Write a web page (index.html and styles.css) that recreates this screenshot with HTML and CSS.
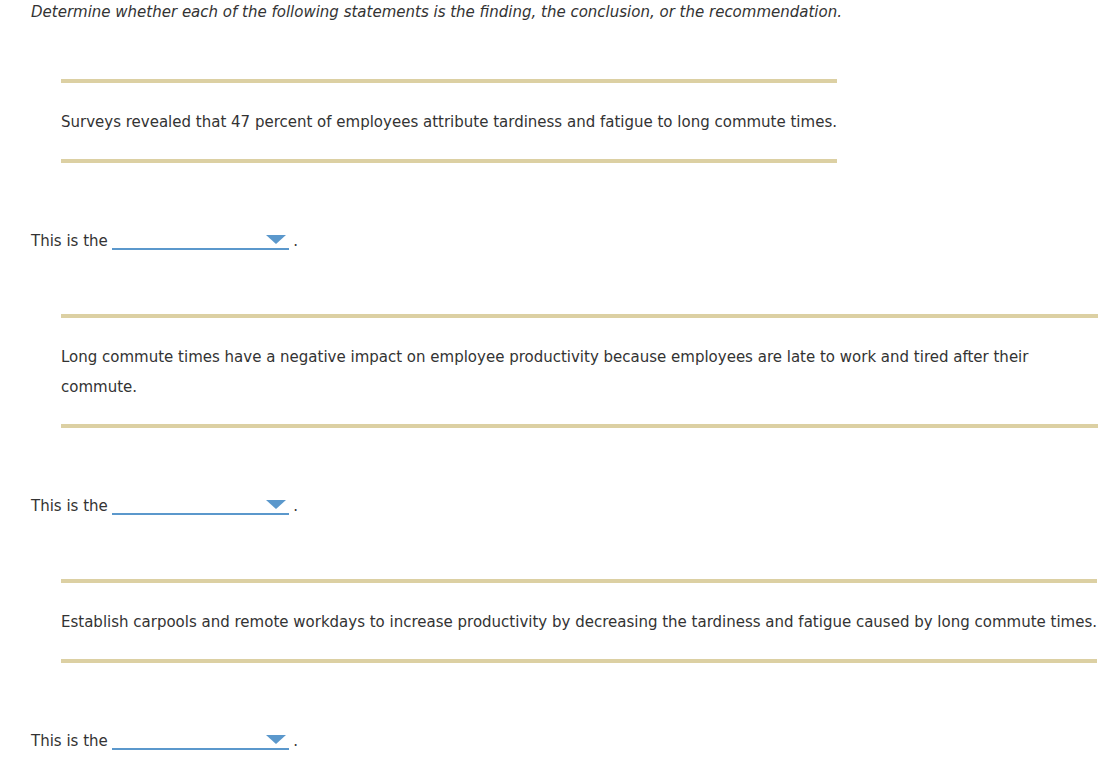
FILE: index.html
```html
<!DOCTYPE html>
<html lang="en">
<head>
  <meta charset="UTF-8">
  <title>Finding, Conclusion, Recommendation</title>
  <link rel="stylesheet" href="styles.css">
</head>
<body>
  <main class="question">
    <p class="prompt">Determine whether each of the following statements is the finding, the conclusion, or the recommendation.</p>

    <div class="statement">Surveys revealed that 47 percent of employees attribute tardiness and fatigue to long commute times.</div>
    <p class="answer">This is the <span class="dropdown"><span class="caret"></span></span> .</p>

    <div class="statement">Long commute times have a negative impact on employee productivity because employees are late to work and tired after their commute.</div>
    <p class="answer">This is the <span class="dropdown"><span class="caret"></span></span> .</p>

    <div class="statement">Establish carpools and remote workdays to increase productivity by decreasing the tardiness and fatigue caused by long commute times.</div>
    <p class="answer">This is the <span class="dropdown"><span class="caret"></span></span> .</p>
  </main>
</body>
</html>
```

FILE: styles.css
```css
/* Question layout */
body { margin: 0; background: #fff; color: #333; font-family: Verdana, 'DejaVu Sans', sans-serif; font-size: 15px; }
.question { padding: 2px 21px 0 31px; }

.prompt { margin: 0; line-height: 20px; font-style: italic; }

.statement {
  display: table;
  max-width: 1037px;
  margin: 57px 0 0 30px;
  padding: 24px 0 22px;
  border-top: 4px solid #dcd0a3;
  border-bottom: 4px solid #dcd0a3;
  line-height: 30px;
}

.answer { margin: 63px 0 58px; line-height: 30px; }
.answer + .statement { margin-top: 0; }

.dropdown {
  display: inline-block;
  position: relative;
  width: 177px;
  height: 20px;
  margin-left: -1px;
  vertical-align: -4px;
  border-bottom: 2px solid #5b98cc;
}
.caret {
  position: absolute;
  right: 3px;
  top: 7px;
  width: 0;
  height: 0;
  border-left: 10px solid transparent;
  border-right: 10px solid transparent;
  border-top: 9px solid #5b98cc;
}
```
